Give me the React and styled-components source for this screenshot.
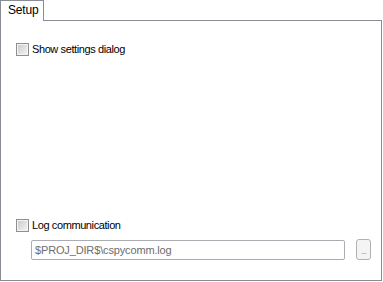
import React from 'react'
import styled, { createGlobalStyle } from 'styled-components'

const GlobalStyle = createGlobalStyle`
  html, body {
    margin: 0;
    padding: 0;
    background: #ffffff;
  }
  body {
    font-family: "Liberation Sans", Arial, sans-serif;
    font-size: 11px;
    color: #000000;
  }
`

function Checkbox({ label }) {
  return (
    <CheckRow>
      <CheckBoxBox />
      <span>{label}</span>
    </CheckRow>
  )
}

function App() {
  return (
    <>
      <GlobalStyle />
      <Container>
        <TabStrip>
          <Tab>Setup</Tab>
          <TabFill />
        </TabStrip>
        <Panel>
          <Checkbox label="Show settings dialog" />
          <Spacer />
          <Checkbox label="Log communication" />
          <PathRow>
            <PathInput>$PROJ_DIR$\cspycomm.log</PathInput>
            <BrowseButton>...</BrowseButton>
          </PathRow>
        </Panel>
      </Container>
    </>
  )
}

export default App

const Container = styled.div`
  width: 382px;
  height: 281px;
  display: flex;
  flex-direction: column;
`

const TabStrip = styled.div`
  display: flex;
  height: 21px;
  flex-shrink: 0;
`

const Tab = styled.div`
  width: 44px;
  height: 21px;
  box-sizing: border-box;
  border: 1px solid #898c95;
  border-bottom: none;
  background: #ffffff;
  padding: 3px 0 0 7px;
  font-size: 12px;
  line-height: 13px;
  letter-spacing: -0.2px;
`

const TabFill = styled.div`
  flex: 1;
  border-bottom: 1px solid #898c95;
`

const Panel = styled.div`
  flex: 1;
  box-sizing: border-box;
  border: 1px solid #898c95;
  border-top: none;
  padding: 22px 0 0 15px;
  display: flex;
  flex-direction: column;
`

const CheckRow = styled.label`
  display: flex;
  align-items: center;
  gap: 3px;
  height: 13px;
  font-size: 11px;
  line-height: 13px;
  letter-spacing: -0.4px;
`

const CheckBoxBox = styled.span`
  width: 13px;
  height: 13px;
  box-sizing: border-box;
  border: 1px solid #8e8f8f;
  box-shadow: inset 0 0 0 1px #f4f4f4;
  background-image: linear-gradient(135deg, #c8c8c8 0%, #f6f6f6 100%);
  flex-shrink: 0;
`

const Spacer = styled.div`
  flex: 1;
`

const PathRow = styled.div`
  display: flex;
  align-items: center;
  gap: 11px;
  margin: 7px 0 20px 15px;
`

const PathInput = styled.div`
  width: 314px;
  height: 20px;
  box-sizing: border-box;
  border: 1px solid #abadb3;
  border-radius: 2px;
  padding: 0 3px;
  color: #6d6d6d;
  font-size: 11px;
  line-height: 18px;
  letter-spacing: -0.15px;
  white-space: nowrap;
  overflow: hidden;
`

const BrowseButton = styled.div`
  width: 15px;
  height: 21px;
  box-sizing: border-box;
  border: 1px solid #adb2b5;
  border-radius: 3px;
  background: #f4f4f4;
  color: #a0a0a0;
  font-size: 9px;
  line-height: 22px;
  text-align: center;
  letter-spacing: -1px;
`
